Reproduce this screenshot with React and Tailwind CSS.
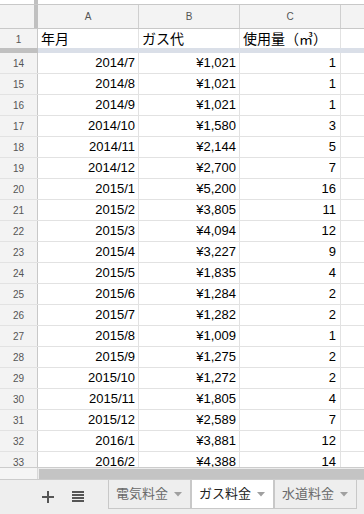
import React from 'react';

const rows = [
  [14, '2014/7', '¥1,021', 1],
  [15, '2014/8', '¥1,021', 1],
  [16, '2014/9', '¥1,021', 1],
  [17, '2014/10', '¥1,580', 3],
  [18, '2014/11', '¥2,144', 5],
  [19, '2014/12', '¥2,700', 7],
  [20, '2015/1', '¥5,200', 16],
  [21, '2015/2', '¥3,805', 11],
  [22, '2015/3', '¥4,094', 12],
  [23, '2015/4', '¥3,227', 9],
  [24, '2015/5', '¥1,835', 4],
  [25, '2015/6', '¥1,284', 2],
  [26, '2015/7', '¥1,282', 2],
  [27, '2015/8', '¥1,009', 1],
  [28, '2015/9', '¥1,275', 2],
  [29, '2015/10', '¥1,272', 2],
  [30, '2015/11', '¥1,805', 4],
  [31, '2015/12', '¥2,589', 7],
  [32, '2016/1', '¥3,881', 12],
  [33, '2016/2', '¥4,388', 14],
];

const cols = 'grid grid-cols-[38px_101px_101px_101px_1fr]';

function Caret() {
  return (
    <svg width="8" height="5" viewBox="0 0 8 5" className="ml-auto shrink-0">
      <path d="M0 0h8L4 4.5z" fill="#a0a0a0" />
    </svg>
  );
}

function Tab({ label, active }) {
  return (
    <div
      className={
        'flex h-[29px] w-[83px] shrink-0 items-center border-x border-b border-[#c8c8c8] pl-[7px] pr-[8px] text-[13px] whitespace-nowrap ' +
        (active ? 'bg-white text-[#222]' : 'bg-[#eeeeee] text-[#6a6a6a]')
      }
    >
      <span>{label}</span>
      <Caret />
    </div>
  );
}

export default function App() {
  return (
    <div
      className="flex h-[514px] w-[364px] flex-col overflow-hidden bg-white text-[13px] text-black"
      style={{ fontFamily: '"Liberation Sans", Arial, "Noto Sans CJK JP", sans-serif' }}
    >
      {/* top remnant of toolbar */}
      <div className={cols + ' h-[4px]'}>
        <div className="border-r-[4px] border-[#c0c0c0]" />
      </div>

      {/* column headers */}
      <div className={cols + ' h-[25px] border-y border-[#c8c8c8] bg-[#f3f3f3] text-[10px] text-[#555]'}>
        <div className="border-r-[4px] border-[#c0c0c0]" />
        <div className="flex items-center justify-center border-r border-[#cfcfcf]">A</div>
        <div className="flex items-center justify-center border-r border-[#cfcfcf]">B</div>
        <div className="flex items-center justify-center border-r border-[#cfcfcf]">C</div>
        <div />
      </div>

      {/* frozen row 1 */}
      <div className={cols + ' h-[19px]'}>
        <div className="flex items-center justify-center border-r border-[#c8c8c8] bg-[#f3f3f3] text-[10px] text-[#555]">1</div>
        <div className="flex items-center border-r border-[#e2e2e2] pl-[3px] text-[14px]">年月</div>
        <div className="flex items-center border-r border-[#e2e2e2] pl-[3px] text-[14px]">ガス代</div>
        <div className="flex items-center border-r border-[#e2e2e2] pl-[3px] text-[14px]">使用量（㎥）</div>
        <div />
      </div>

      {/* frozen divider */}
      <div className={cols + ' h-[5px]'}>
        <div className="bg-[#c0c0c0]" />
        <div className="col-span-4 bg-[#dadfe8]" />
      </div>

      {/* scrolling rows */}
      <div className="h-[414px] overflow-hidden">
        {rows.map(([n, month, cost, use]) => (
          <div key={n} className={cols + ' h-[21px] border-b border-[#e2e2e2]'}>
            <div className="flex items-center justify-center border-r border-[#c8c8c8] bg-[#f3f3f3] text-[10px] text-[#555]">{n}</div>
            <div className="flex items-center justify-end border-r border-[#e2e2e2] pr-[3px]">{month}</div>
            <div className="flex items-center justify-end border-r border-[#e2e2e2] pr-[3px]">{cost}</div>
            <div className="flex items-center justify-end border-r border-[#e2e2e2] pr-[4px]">{use}</div>
            <div />
          </div>
        ))}
      </div>

      {/* horizontal scrollbar */}
      <div className="flex h-[13px] border-y border-[#cccccc] bg-[#ececec]">
        <div className="w-[38px] border-r border-[#d8d8d8] bg-[#f5f5f5]" />
        <div className="flex flex-1 items-center pl-[1px]">
          <div className="h-[10px] w-full bg-[#c4c4c4]" />
        </div>
      </div>

      {/* sheet tabs */}
      <div className="flex flex-1 bg-[#eeeeee]">
        <div className="flex h-[33px] w-[108px] shrink-0 items-center">
          <svg width="12" height="12" viewBox="0 0 12 12" className="ml-[42px]">
            <path d="M5 0h2v5h5v2H7v5H5V7H0V5h5z" fill="#555" />
          </svg>
          <svg width="12" height="11" viewBox="0 0 12 11" className="ml-[18px]">
            <path d="M0 0h12v2H0zM0 3h12v2H0zM0 6h12v2H0zM0 9h12v2H0z" fill="#555" />
          </svg>
        </div>
        <Tab label="電気料金" />
        <Tab label="ガス料金" active />
        <Tab label="水道料金" />
      </div>
    </div>
  );
}
